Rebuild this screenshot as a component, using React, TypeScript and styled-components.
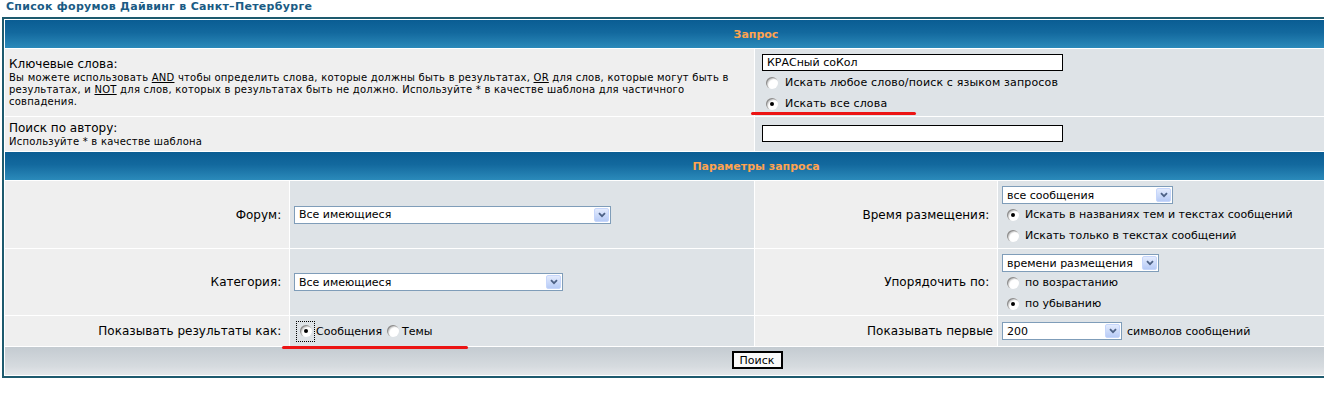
import React from "react";
import styled, { createGlobalStyle } from "styled-components";

const GlobalStyle = createGlobalStyle`
  html, body { margin: 0; padding: 0; background: #ffffff; overflow: hidden; }
  body { font-family: "DejaVu Sans", Verdana, sans-serif; color: #000; }
  * { box-sizing: border-box; }
`;

const Page = styled.div`
  position: relative;
  width: 1324px;
  height: 394px;
  overflow: hidden;
  padding-left: 2px;
`;

const Nav = styled.div`
  height: 17px;
  padding-left: 4px;
  font: bold 11px/14px "DejaVu Sans", Verdana, sans-serif;
  letter-spacing: 0.3px;
  color: #1a5b84;
  white-space: nowrap;
`;

const Forumline = styled.div`
  display: grid;
  grid-template-columns: 284px 464px 242px 509px;
  grid-template-rows: 28px 67px 34px 28px 67px 66px 30px 28px;
  gap: 1px;
  padding: 1px;
  border: 2px solid #1d5a6e;
  background: #ffffff;
  width: max-content;
`;

const Th = styled.div`
  grid-column: 1 / -1;
  display: flex;
  align-items: center;
  justify-content: center;
  background: linear-gradient(#0a5d93 0%, #13699e 45%, #2b8aba 100%);
  color: #ffa34f;
  font: bold 11px "DejaVu Sans", Verdana, sans-serif;
`;

const Cell = styled.div<{ $tone: "row1" | "row2"; $span?: number; $top?: number }>`
  grid-column: span ${(p) => p.$span ?? 1};
  background: ${(p) => (p.$tone === "row1" ? "#efefef" : "#dee3e7")};
  display: flex;
  flex-direction: column;
  justify-content: ${(p) => (p.$top !== undefined ? "flex-start" : "center")};
  padding: ${(p) => (p.$top !== undefined ? `${p.$top}px` : "0")} 4px 0 4px;
  min-width: 0;
  overflow: hidden;
`;

const LabelCell = styled(Cell)`
  align-items: flex-end;
  font-size: 12px;
  white-space: nowrap;
`;

const Gen = styled.span`
  font-size: 12px;
  line-height: 15px;
`;

const GenSmall = styled.span`
  font-size: 10px;
  line-height: 12px;
  letter-spacing: 0.24px;
  white-space: nowrap;
`;

const TextInput = styled.input`
  width: 301px;
  height: 17px;
  border: 1px solid #000;
  background: #fff;
  font: 11px "DejaVu Sans", Verdana, sans-serif;
  padding: 0 4px;
  margin: 0 0 1px 3px;
  outline: none;
  color: #000;
`;

const RadioRow = styled.div<{ $h?: number; $indent?: number }>`
  display: flex;
  align-items: center;
  height: ${(p) => p.$h ?? 21}px;
  padding-left: ${(p) => p.$indent ?? 0}px;
  font-size: 11px;
  white-space: nowrap;
`;

const Radio = styled.span<{ $checked?: boolean; $bare?: boolean }>`
  position: relative;
  flex: none;
  display: inline-block;
  width: 12px;
  height: 12px;
  border-radius: 50%;
  margin: ${(p) => (p.$bare ? "0" : "0 3px 0 5px")};
  background: #ffffff;
  box-shadow: inset 1px 1px 0 #8e8e8e, inset 2px 2px 1px #cfcfcf;
  &::after {
    content: "";
    display: ${(p) => (p.$checked ? "block" : "none")};
    position: absolute;
    left: 4px;
    top: 4px;
    width: 4px;
    height: 4px;
    border-radius: 50%;
    background: #000;
  }
`;

const FocusBox = styled.span`
  display: inline-flex;
  flex: none;
  border: 1px dotted #000;
  padding: 3px 2px 4px 3px;
  margin: 0 1px 0 2px;
`;

const RadioText = styled.span<{ $gap?: number; $track?: number }>`
  margin-left: ${(p) => p.$gap ?? 3}px;
  letter-spacing: ${(p) => p.$track ?? 0}px;
`;

const Select = styled.div<{ $w: number }>`
  display: flex;
  align-items: center;
  justify-content: space-between;
  flex: none;
  width: ${(p) => p.$w}px;
  height: 18px;
  border: 1px solid #7f9db9;
  background: #fff;
  font-size: 11px;
  padding: 0 1px 0 4px;
  white-space: nowrap;
`;

const ArrowBtn = styled.span`
  display: flex;
  align-items: center;
  justify-content: center;
  width: 15px;
  height: 14px;
  border-radius: 2px;
  border: 1px solid #c6d6fb;
  background: linear-gradient(#e3ebfd, #b7cbf6);
`;

const Line = styled.div`
  display: flex;
  align-items: center;
  font-size: 11px;
  white-space: nowrap;
`;

const CatBottom = styled.div`
  grid-column: 1 / -1;
  display: flex;
  align-items: flex-start;
  justify-content: center;
  padding-top: 4px;
  background: linear-gradient(#c4cbd1 0%, #d6dbdf 70%, #e4e7ea 100%);
`;

const Button = styled.button`
  width: 51px;
  height: 18px;
  border: 2px solid #000;
  background: #fafafa;
  font: 11px "DejaVu Sans", Verdana, sans-serif;
  padding: 0;
  color: #000;
  margin-left: 2px;
`;

const Marker = styled.span<{ $x: number; $y: number; $w: number }>`
  position: absolute;
  left: ${(p) => p.$x}px;
  top: ${(p) => p.$y}px;
  width: ${(p) => p.$w}px;
  height: 3px;
  border-radius: 2px;
  background: #ec1414;
`;

const Chevron = () => (
  <svg width="8" height="6" viewBox="0 0 8 6">
    <path d="M1 1.2 L4 4.2 L7 1.2" stroke="#4d6185" strokeWidth="1.8" fill="none" />
  </svg>
);

const Dropdown = ({ w, value }: { w: number; value: string }) => (
  <Select $w={w}>
    <span>{value}</span>
    <ArrowBtn>
      <Chevron />
    </ArrowBtn>
  </Select>
);

export default function App() {
  return (
    <>
      <GlobalStyle />
      <Page>
        <Nav>Список форумов Дайвинг в Санкт–Петербурге</Nav>
        <Forumline>
          <Th>Запрос</Th>

          <Cell $tone="row1" $span={2}>
            <Gen>Ключевые слова:</Gen>
            <GenSmall>
              Вы можете использовать <u>AND</u> чтобы определить слова, которые должны быть в результатах, <u>OR</u> для слов, которые могут быть в
              <br />
              результатах, и <u>NOT</u> для слов, которых в результатах быть не должно. Используйте * в качестве шаблона для частичного
              <br />
              совпадения.
            </GenSmall>
          </Cell>
          <Cell $tone="row2" $span={2} $top={5}>
            <TextInput readOnly defaultValue="КРАСный соКол" />
            <RadioRow $indent={2}>
              <Radio />
              <RadioText $gap={4} $track={0.15}>Искать любое слово/поиск с языком запросов</RadioText>
            </RadioRow>
            <RadioRow $indent={2}>
              <Radio $checked />
              <RadioText $gap={4} $track={0.15}>Искать все слова</RadioText>
            </RadioRow>
          </Cell>

          <Cell $tone="row1" $span={2}>
            <Gen>Поиск по автору:</Gen>
            <GenSmall>Используйте * в качестве шаблона</GenSmall>
          </Cell>
          <Cell $tone="row2" $span={2}>
            <TextInput readOnly defaultValue="" />
          </Cell>

          <Th>Параметры запроса</Th>

          <LabelCell $tone="row1">Форум:&nbsp;</LabelCell>
          <Cell $tone="row2">
            <Dropdown w={317} value="Все имеющиеся" />
          </Cell>
          <LabelCell $tone="row1">Время размещения:&nbsp;</LabelCell>
          <Cell $tone="row2" $top={5}>
            <Dropdown w={171} value="все сообщения" />
            <RadioRow>
              <Radio $checked />
              <RadioText>Искать в названиях тем и текстах сообщений</RadioText>
            </RadioRow>
            <RadioRow>
              <Radio />
              <RadioText>Искать только в текстах сообщений</RadioText>
            </RadioRow>
          </Cell>

          <LabelCell $tone="row1">Категория:&nbsp;</LabelCell>
          <Cell $tone="row2">
            <Dropdown w={269} value="Все имеющиеся" />
          </Cell>
          <LabelCell $tone="row1">Упорядочить по:&nbsp;</LabelCell>
          <Cell $tone="row2" $top={5}>
            <Dropdown w={157} value="времени размещения" />
            <RadioRow>
              <Radio />
              <RadioText>по возрастанию</RadioText>
            </RadioRow>
            <RadioRow>
              <Radio $checked />
              <RadioText>по убыванию</RadioText>
            </RadioRow>
          </Cell>

          <LabelCell $tone="row1">Показывать результаты как:&nbsp;</LabelCell>
          <Cell $tone="row2">
            <RadioRow $h={22}>
              <FocusBox>
                <Radio $checked $bare />
              </FocusBox>
              <RadioText $gap={0}>Сообщения</RadioText>
              <Radio />
              <RadioText $gap={0}>Темы</RadioText>
            </RadioRow>
          </Cell>
          <LabelCell $tone="row1">Показывать первые</LabelCell>
          <Cell $tone="row2">
            <Line>
              <Dropdown w={120} value="200" />
              <RadioText $gap={5}>символов сообщений</RadioText>
            </Line>
          </Cell>

          <CatBottom>
            <Button type="button">Поиск</Button>
          </CatBottom>
        </Forumline>
        <Marker $x={751} $y={112} $w={165} />
        <Marker $x={282} $y={346} $w={186} />
      </Page>
    </>
  );
}
